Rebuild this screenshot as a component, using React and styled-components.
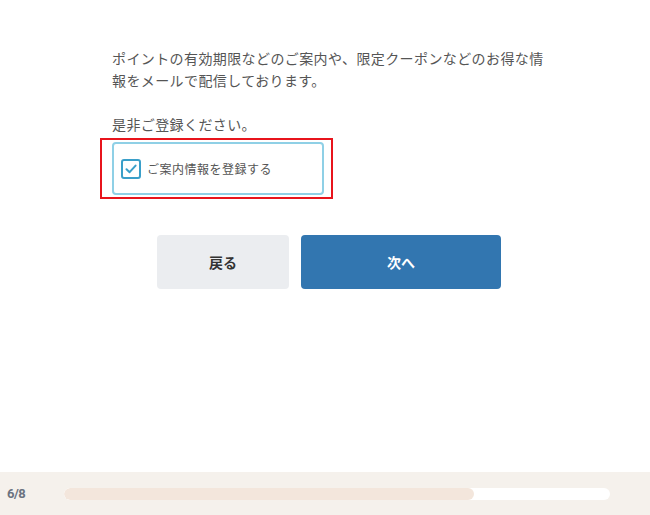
import styled, { createGlobalStyle } from "styled-components";

const GlobalStyle = createGlobalStyle`
  html, body {
    margin: 0;
    padding: 0;
    background: #ffffff;
  }
  body {
    font-family: "Noto Sans CJK JP", "Noto Sans", sans-serif;
  }
`;

const App = () => {
  const step = 6;
  const total = 8;
  return (
    <Page>
      <GlobalStyle />
      <Main>
        <Lead>
          ポイントの有効期限などのご案内や、限定クーポンなどのお得な情報をメールで配信しております。
          <br />
          <br />
          是非ご登録ください。
        </Lead>
        <Highlight>
          <CheckLabel>
            <CheckBox>
              <svg width="14" height="14" viewBox="0 0 14 14" fill="none">
                <path
                  d="M2.5 7.2 L5.6 10.2 L11.6 3.6"
                  stroke="#3a9fc9"
                  strokeWidth="2"
                  strokeLinecap="round"
                  strokeLinejoin="round"
                />
              </svg>
            </CheckBox>
            <span>ご案内情報を登録する</span>
          </CheckLabel>
        </Highlight>
        <Buttons>
          <Button>戻る</Button>
          <Button primary>次へ</Button>
        </Buttons>
      </Main>
      <Footer>
        <StepText>
          {step}/{total}
        </StepText>
        <Track>
          <Fill style={{ width: `${(step / total) * 100}%` }} />
        </Track>
      </Footer>
    </Page>
  );
};

export default App;

const Page = styled.div`
  height: 515px;
  width: 650px;
  display: flex;
  flex-direction: column;
`;

const Main = styled.div`
  flex: 1;
  padding: 47px 0 0 112px;
  display: flex;
  flex-direction: column;
  align-items: flex-start;
`;

const Lead = styled.p`
  margin: 0;
  width: 440px;
  font-size: 14px;
  line-height: 22px;
  letter-spacing: 0.4px;
  color: #555555;
`;

const Highlight = styled.div`
  margin: 3px 0 0 -12px;
  border: 2px solid #e8141c;
  padding: 2px 7px 2px 10px;
`;

const CheckLabel = styled.label`
  box-sizing: border-box;
  width: 212px;
  height: 53px;
  border: 2px solid #8fd0e6;
  border-radius: 4px;
  display: flex;
  align-items: center;
  gap: 6px;
  padding-left: 7px;
  font-size: 12px;
  letter-spacing: 0.5px;
  color: #555555;
`;

const CheckBox = styled.span`
  box-sizing: border-box;
  width: 20px;
  height: 20px;
  border: 2px solid #3a9fc9;
  border-radius: 3px;
  display: flex;
  align-items: center;
  justify-content: center;
`;

const Buttons = styled.div`
  display: flex;
  gap: 12px;
  margin: 36px 0 0 45px;
`;

const Button = styled.button`
  width: ${(p) => (p.primary ? "200px" : "132px")};
  height: 54px;
  border: none;
  border-radius: 4px;
  background: ${(p) => (p.primary ? "#3276b0" : "#ebedf0")};
  color: ${(p) => (p.primary ? "#ffffff" : "#333333")};
  font-family: "Noto Sans CJK JP", sans-serif;
  font-size: 14px;
  font-weight: 700;
  cursor: pointer;
`;

const Footer = styled.div`
  height: 43px;
  background: #f5f1ec;
  display: flex;
  align-items: center;
  padding: 0 40px 0 7px;
  gap: 38px;
`;

const StepText = styled.span`
  font-family: "Roboto", sans-serif;
  font-size: 13px;
  font-weight: 700;
  color: #6b7380;
  letter-spacing: -0.5px;
  width: 19px;
`;

const Track = styled.div`
  flex: 1;
  height: 12px;
  background: #ffffff;
  border-radius: 6px;
  overflow: hidden;
`;

const Fill = styled.div`
  height: 100%;
  background: #f3e6dc;
  border-radius: 6px;
`;
